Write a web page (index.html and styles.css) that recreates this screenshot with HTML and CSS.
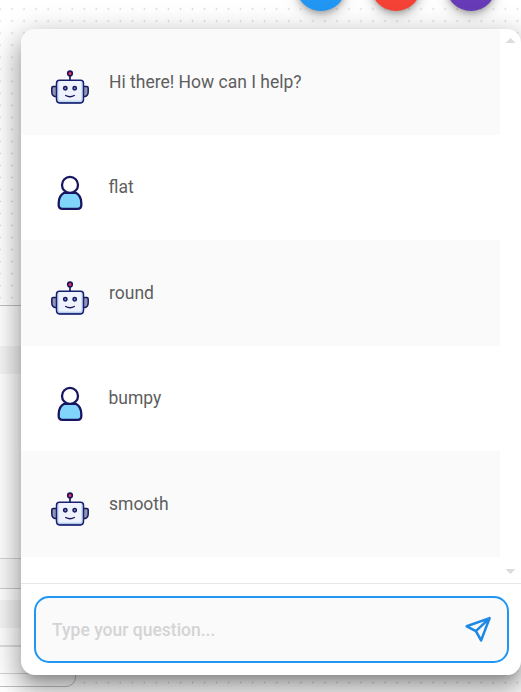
FILE: index.html
```html
<!DOCTYPE html>
<html lang="en">
<head>
<meta charset="utf-8">
<title>Chat</title>
<link rel="stylesheet" href="styles.css">
</head>
<body>
<svg class="symbols" aria-hidden="true">
  <symbol id="robot" viewBox="0 0 38 34">
    <path d="M19 5v6" stroke="#181660" stroke-width="1.7"/>
    <circle cx="19" cy="3.4" r="2.3" fill="#f03258" stroke="#181660" stroke-width="1.6"/>
    <path d="M6 16.5H2.2Q.8 16.5.8 18v3.5q0 4.2 3 5H6zM32 16.5h3.8q1.4 0 1.4 1.5v3.5q0 4.2-3 5H32z" fill="#8d96b5" stroke="#181660" stroke-width="1.5"/>
    <path d="M8.5 10.2h21q3 0 3 3v16q0 3.8-3.8 3.8H9.3q-3.8 0-3.8-3.8v-16q0-3 3-3z" fill="#edf2fc"/>
    <path d="M6.7 12v16.5q0 3 3 3h18.6q3 0 3-3V12" fill="none" stroke="#c6daf3" stroke-width="2"/>
    <path d="M8.5 10.2h21q3 0 3 3v16q0 3.8-3.8 3.8H9.3q-3.8 0-3.8-3.8v-16q0-3 3-3z" fill="none" stroke="#181e70" stroke-width="1.5"/>
    <path d="M8 32.7h22" stroke="#293780" stroke-width="1.6"/>
    <g fill="#7893c8" stroke="#181660" stroke-width="1.5"><circle cx="14.3" cy="18.3" r="1.7"/><circle cx="23.7" cy="18.3" r="1.7"/></g>
    <path d="M14.7 25.5q4.3 2.4 8.6 0" fill="none" stroke="#181660" stroke-width="1.4" stroke-linecap="round"/>
  </symbol>
  <symbol id="person" viewBox="0 0 26 35">
    <path d="M7.2 17.8Q1.7 20.8 1.7 28v2.2q0 3.6 3.8 3.6h15q3.8 0 3.8-3.6V28q0-7.2-5.5-10.2z" fill="#81d4fa" stroke="#181660" stroke-width="2.3"/>
    <circle cx="13" cy="9.9" r="8" fill="#fff" stroke="#181660" stroke-width="2.3"/>
  </symbol>
</svg>

<div class="canvas">
  <div class="node">
    <div class="node-title"></div>
    <div class="node-band"></div>
    <div class="node-body"></div>
    <div class="node-field"></div>
    <div class="node-gap"></div>
    <div class="node-band"></div>
    <div class="node-foot"></div>
    <div class="node-output"></div>
    <div class="node-end"></div>
  </div>
  <div class="fab fab-blue"></div>
  <div class="fab fab-red"></div>
  <div class="fab fab-purple"></div>

  <main class="chat">
    <section class="history">
      <div class="messages">
        <div class="message bot"><svg class="robot"><use href="#robot"/></svg><p>Hi there! How can I help?</p></div>
        <div class="message"><svg class="person"><use href="#person"/></svg><p>flat</p></div>
        <div class="message bot"><svg class="robot"><use href="#robot"/></svg><p>round</p></div>
        <div class="message"><svg class="person"><use href="#person"/></svg><p>bumpy</p></div>
        <div class="message bot"><svg class="robot"><use href="#robot"/></svg><p>smooth</p></div>
      </div>
      <div class="scrollbar"><i class="up"></i><i class="down"></i></div>
    </section>
    <form class="composer">
      <div class="field">
        <span class="placeholder">Type your question...</span>
        <svg class="send" viewBox="0 0 28 28"><path d="M25.5 2.2 1.8 10.7 11.3 15.7 16.7 25.3zM25.5 2.2 11.3 15.7" fill="none" stroke="#1e88e5" stroke-width="2.7" stroke-linejoin="round" stroke-linecap="round"/></svg>
      </div>
    </form>
  </main>
</div>
</body>
</html>
```
FILE: styles.css
```css
* { box-sizing: border-box; }
body { margin: 0; font-family: Roboto, sans-serif; overflow: hidden; }
.symbols { position: absolute; width: 0; height: 0; }
.canvas {
  position: relative;
  width: 521px;
  height: 692px;
  overflow: hidden;
  background: #fff radial-gradient(circle at 6px 6px, #ccc 0.6px, transparent 1.1px) -6px 3px / 12.04px 12.04px;
}
.node {
  position: absolute;
  left: -224px;
  top: 305px;
  width: 300px;
  height: 382px;
  overflow: hidden;
  background: #fff;
  border: 1px solid #c0c0c0;
  border-radius: 0 0 10px 10px;
}
.node-title { height: 40px; }
.node-band { height: 28px; background: #f5f5f5; }
.node-body { height: 185px; border-bottom: 1px solid #d4d4d4; }
.node-field { height: 30px; background: #fafafa; border-bottom: 1px solid #ccc; }
.node-gap { height: 11px; }
.node-foot { height: 19px; border-bottom: 2px solid #e0e0e0; }
.node-output { height: 27px; border-bottom: 1px solid #d4d4d4; }
.node-end { height: 12px; }
.fab {
  position: absolute;
  top: -39px;
  width: 50px;
  height: 50px;
  border-radius: 50%;
  box-shadow: 0 3px 5px -1px rgba(0,0,0,.2), 0 6px 10px rgba(0,0,0,.14), 0 1px 18px rgba(0,0,0,.12);
}
.fab-blue { left: 296px; background: #2196f3; }
.fab-red { left: 371px; background: #f44336; }
.fab-purple { left: 446px; background: #673ab7; }
.chat {
  position: absolute;
  left: 21px;
  top: 29px;
  width: 500px;
  height: 646px;
  display: flex;
  flex-direction: column;
  overflow: hidden;
  background: #fff;
  border-radius: 14px;
  box-shadow: 0 8px 10px -5px rgba(0,0,0,.2), 0 16px 24px 2px rgba(0,0,0,.14), 0 6px 30px 5px rgba(0,0,0,.12), 0 12px 28px 2px rgba(0,0,0,.16);
}
.history { display: flex; height: 554px; }
.messages { width: 479px; }
.message {
  display: flex;
  height: 105.6px;
  padding: 41px 0 0 30px;
}
.message:not(.bot) { padding-top: 40.3px; }
.bot { background: #fafafa; }
.message p { margin: 0; font-size: 17.5px; line-height: 24px; color: #5e5e5e; }
.robot { width: 38px; height: 34px; margin-right: 20px; }
.person { width: 26px; height: 35px; margin: 0 26px 0 6px; }
.message:not(.bot) p { margin-left: -0.5px; }
.scrollbar {
  width: 21px;
  display: flex;
  flex-direction: column;
  justify-content: space-between;
  align-items: center;
  padding: 9px 0;
}
.scrollbar i { width: 10px; height: 5px; background: #dcdcdc; }
.up { clip-path: polygon(50% 0, 100% 100%, 0 100%); }
.down { clip-path: polygon(0 0, 100% 0, 50% 100%); }
.composer { flex: 1; border-top: 1px solid #e8e8e8; padding: 12px 12px 12px 13px; }
.field {
  display: flex;
  align-items: center;
  justify-content: space-between;
  height: 67px;
  padding: 0 15px 0 16px;
  background: #fafafa;
  border: 2px solid #2196f3;
  border-radius: 15px;
}
.placeholder { font-size: 17.5px; font-weight: 500; color: #d4d4d4; }
.send { width: 27px; height: 27px; }
```
